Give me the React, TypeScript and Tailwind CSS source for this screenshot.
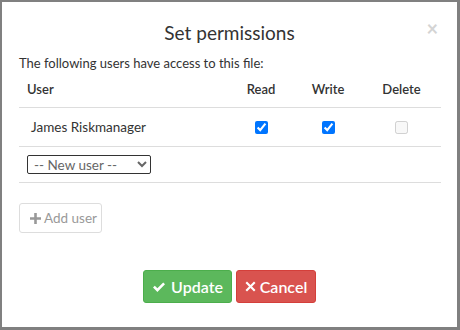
import React from 'react';

const font = { fontFamily: 'Lato, "Open Sans", sans-serif' };

export default function App() {
  return (
    <div
      className="w-[460px] h-[330px] bg-white border-l-2 border-t-2 border-r-[3px] border-b-[3px] border-[#808080] flex flex-col text-[#333]"
      style={font}
    >
      {/* Header */}
      <div className="relative h-[60px] flex items-center justify-center pt-[1px]">
        <h1 className="text-[19px] leading-none text-[#333]">Set permissions</h1>
        <span className="absolute right-[19px] top-[16px] text-[#d4d4d4] text-[20px] font-bold leading-none">×</span>
      </div>

      {/* Body */}
      <div className="px-[17px] flex flex-col">
        <p className="text-[13px] leading-[20px] mt-[-9px]">The following users have access to this file:</p>

        <div className="grid grid-cols-[209px_66px_68px_79px] text-[13px] mt-0">
          <div className="h-[35px] flex items-center pl-[8px] font-semibold border-b border-[#ddd]">User</div>
          <div className="h-[35px] flex items-center justify-center font-semibold border-b border-[#ddd]">Read</div>
          <div className="h-[35px] flex items-center justify-center font-semibold border-b border-[#ddd]">Write</div>
          <div className="h-[35px] flex items-center justify-center font-semibold border-b border-[#ddd]">Delete</div>

          <div className="h-[39px] flex items-center pl-[12px] text-[13.5px] border-b border-[#ddd]">James Riskmanager</div>
          <div className="h-[39px] flex items-center justify-center border-b border-[#ddd]">
            <input type="checkbox" checked readOnly className="w-[13px] h-[13px] m-0" />
          </div>
          <div className="h-[39px] flex items-center justify-center border-b border-[#ddd]">
            <input type="checkbox" checked readOnly className="w-[13px] h-[13px] m-0" />
          </div>
          <div className="h-[39px] flex items-center justify-center border-b border-[#ddd]">
            <input type="checkbox" disabled className="w-[13px] h-[13px] m-0" />
          </div>

          <div className="col-span-4 h-[36px] flex items-center pl-[8px] border-b border-[#ddd]">
            <select
              className="w-[124px] h-[19px] border border-[#333] rounded-[2px] text-[13.5px] text-[#666] pl-[2px] bg-white"
              style={font}
              defaultValue=""
            >
              <option value="">-- New user --</option>
            </select>
          </div>
        </div>

        <div className="mt-[20px]">
          <button className="h-[30px] w-[83px] pl-[10px] border border-[#ddd] rounded-[3px] text-[13.5px] text-[#999] whitespace-nowrap flex items-center gap-[3px]">
            <svg width="11" height="11" viewBox="0 0 11 11">
              <path d="M4.2 0h2.6v4.2H11v2.6H6.8V11H4.2V6.8H0V4.2h4.2z" fill="#999" />
            </svg>
            Add user
          </button>
        </div>
      </div>

      {/* Footer */}
      <div className="flex justify-center gap-[4px] mt-[37px]">
        <button className="w-[89px] h-[33px] rounded-[3px] bg-[#5cb85c] border border-[#4cae4c] text-white text-[16px] font-semibold flex items-center justify-center gap-[5px]">
          <svg width="14" height="12" viewBox="0 0 14 12">
            <path d="M1 6.5l1.8-1.8 2.6 2.6L11.2 1.5 13 3.3 5.4 10.9z" fill="white" />
          </svg>
          Update
        </button>
        <button className="w-[80px] h-[33px] rounded-[3px] bg-[#d9534f] border border-[#d43f3a] text-white text-[16px] font-semibold flex items-center justify-center gap-[4px]">
          <svg width="11" height="11" viewBox="0 0 11 11">
            <path d="M2 0.5L5.5 4 9 0.5 10.5 2 7 5.5l3.5 3.5L9 10.5 5.5 7 2 10.5 0.5 9 4 5.5 0.5 2z" fill="white" />
          </svg>
          Cancel
        </button>
      </div>
    </div>
  );
}
